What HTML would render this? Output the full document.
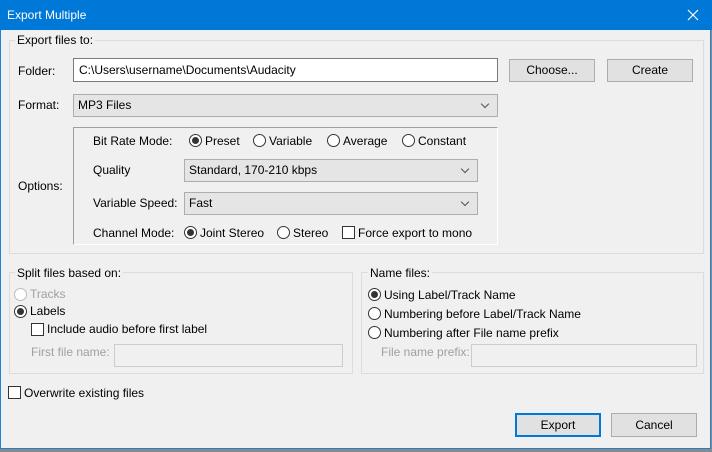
<!DOCTYPE html>
<html><head><style>
*{box-sizing:border-box;margin:0;padding:0}
body{width:712px;height:452px;background:#8a8a8a;font-family:"Liberation Sans",sans-serif;font-size:12px;color:#000;position:relative;overflow:hidden}
.a{position:absolute;white-space:nowrap}
.t{position:absolute;white-space:nowrap;line-height:14px}
.win{position:absolute;left:0;top:0;width:711px;height:449px;background:#f0f0f0;border:1px solid #1883d7}
.title{position:absolute;left:0;top:0;width:712px;height:30px;background:#0078d7;color:#fff;font-size:12px}
.grp{position:absolute;border:1px solid #dcdcdc}
.lg{position:absolute;background:#f0f0f0;padding:0 2px;line-height:14px}
.inp{position:absolute;background:#fff;border:1px solid #7a7a7a;height:24px;line-height:22px;padding-left:5px}
.dis{position:absolute;background:#f0f0f0;border:1px solid #cccccc;height:23px}
.sel{position:absolute;background:#e5e5e5;border:1px solid #adadad;height:23px;line-height:21px;padding-left:4px}
.sel:after{content:"";position:absolute;right:9px;top:6px;width:5px;height:5px;border-right:1px solid #555;border-bottom:1px solid #555;transform:rotate(45deg)}
.btn{position:absolute;background:#e1e1e1;border:1px solid #adadad;text-align:center;line-height:21px;height:23px}
.r{position:absolute;width:13px;height:13px;border:1px solid #333;border-radius:50%;background:#fff}
.r.on:after{content:"";position:absolute;left:2px;top:2px;width:7px;height:7px;border-radius:50%;background:#333}
.c{position:absolute;width:13px;height:13px;border:1px solid #333;background:#fff}
.g{color:#a0a0a0}
</style></head><body>
<div class="win"></div>
<div class="title"><span class="a" style="left:7px;top:8px">Export Multiple</span>
<svg class="a" style="left:687px;top:9px" width="12" height="12"><path d="M1 1L11 11M11 1L1 11" stroke="#fff" stroke-width="1.2"/></svg></div>

<div class="grp" style="left:9px;top:40px;width:695px;height:214px"></div>
<div class="lg" style="left:15px;top:33px">Export files to:</div>
<div class="t" style="left:18px;top:64px">Folder:</div>
<div class="inp" style="left:73px;top:58px;width:425px">C:\Users\username\Documents\Audacity</div>
<div class="btn" style="left:509px;top:59px;width:86px">Choose...</div>
<div class="btn" style="left:607px;top:59px;width:86px">Create</div>
<div class="t" style="left:18px;top:98px">Format:</div>
<div class="sel" style="left:73px;top:94px;width:425px">MP3 Files</div>
<div class="a" style="left:73px;top:127px;width:425px;height:118px;border-top:1px solid #a0a0a0;border-left:1px solid #a0a0a0;border-right:1px solid #fff;border-bottom:1px solid #fff"></div>
<div class="t" style="left:18px;top:179px">Options:</div>
<div class="t" style="left:93px;top:134px">Bit Rate Mode:</div>
<div class="r on" style="left:189px;top:134px"></div><div class="t" style="left:205px;top:134px">Preset</div>
<div class="r" style="left:253px;top:134px"></div><div class="t" style="left:269px;top:134px">Variable</div>
<div class="r" style="left:327px;top:134px"></div><div class="t" style="left:343px;top:134px">Average</div>
<div class="r" style="left:402px;top:134px"></div><div class="t" style="left:418px;top:134px">Constant</div>
<div class="t" style="left:93px;top:163px">Quality</div>
<div class="sel" style="left:184px;top:159px;width:294px">Standard, 170-210 kbps</div>
<div class="t" style="left:93px;top:196px">Variable Speed:</div>
<div class="sel" style="left:184px;top:192px;width:294px">Fast</div>
<div class="t" style="left:93px;top:226px">Channel Mode:</div>
<div class="r on" style="left:184px;top:226px"></div><div class="t" style="left:200px;top:226px">Joint Stereo</div>
<div class="r" style="left:277px;top:226px"></div><div class="t" style="left:293px;top:226px">Stereo</div>
<div class="c" style="left:342px;top:226px"></div><div class="t" style="left:358px;top:226px">Force export to mono</div>

<div class="grp" style="left:9px;top:272px;width:344px;height:102px"></div>
<div class="lg" style="left:15px;top:266px">Split files based on:</div>
<div class="r" style="left:14px;top:288px;border-color:#bcbcbc"></div><div class="t g" style="left:30px;top:287px">Tracks</div>
<div class="r on" style="left:14px;top:305px"></div><div class="t" style="left:30px;top:304px">Labels</div>
<div class="c" style="left:31px;top:323px"></div><div class="t" style="left:47px;top:322px">Include audio before first label</div>
<div class="t g" style="left:31px;top:345px">First file name:</div>
<div class="dis" style="left:114px;top:344px;width:229px"></div>

<div class="grp" style="left:361px;top:272px;width:343px;height:102px"></div>
<div class="lg" style="left:368px;top:266px">Name files:</div>
<div class="r on" style="left:368px;top:288px"></div><div class="t" style="left:384px;top:288px">Using Label/Track Name</div>
<div class="r" style="left:368px;top:307px"></div><div class="t" style="left:384px;top:307px">Numbering before Label/Track Name</div>
<div class="r" style="left:368px;top:326px"></div><div class="t" style="left:384px;top:326px">Numbering after File name prefix</div>
<div class="t g" style="left:381px;top:345px">File name prefix:</div>
<div class="dis" style="left:471px;top:344px;width:226px"></div>

<div class="c" style="left:8px;top:386px"></div><div class="t" style="left:24px;top:386px">Overwrite existing files</div>
<div class="btn" style="left:515px;top:413px;width:86px;height:24px;border:2px solid #0078d7;line-height:20px">Export</div>
<div class="btn" style="left:611px;top:413px;width:86px;height:24px;line-height:22px">Cancel</div>
</body></html>
